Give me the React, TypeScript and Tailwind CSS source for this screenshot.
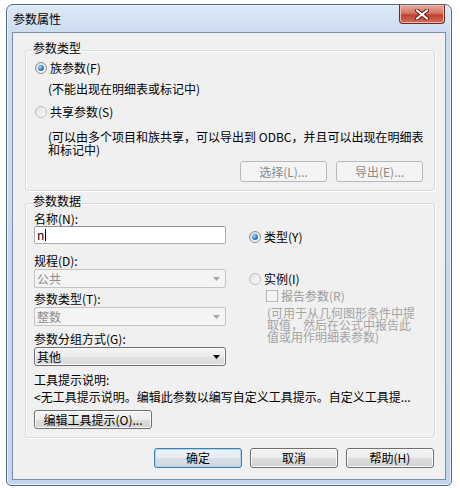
import React from "react";

function Radio({ checked, disabled }: { checked?: boolean; disabled?: boolean }) {
  return (
    <span
      className={
        disabled
          ? "flex h-[12px] w-[12px] shrink-0 items-center justify-center rounded-full border border-[#bcbcbc] bg-[linear-gradient(135deg,#e2e2e2,#fbfbfb)]"
          : "flex h-[12px] w-[12px] shrink-0 items-center justify-center rounded-full border border-[#8a8c8e] bg-[linear-gradient(135deg,#d8d8d8,#ffffff)]"
      }
    >
      {checked && (
        <span className="h-[6px] w-[6px] rounded-full bg-[radial-gradient(circle_at_35%_35%,#a6dcf7,#2a7cbf_55%,#0d4680)]" />
      )}
    </span>
  );
}

function Arrow({ color }: { color: string }) {
  return (
    <svg width="7" height="4" viewBox="0 0 7 4">
      <path d="M0 0 L7 0 L3.5 4 Z" fill={color} />
    </svg>
  );
}

function Button({
  children,
  className,
  disabled,
  focused,
}: {
  children: React.ReactNode;
  className: string;
  disabled?: boolean;
  focused?: boolean;
}) {
  let look =
    "border-[#707070] text-black bg-[linear-gradient(to_bottom,#f4f4f4_0%,#ececec_50%,#dedede_51%,#d2d2d2_100%)] shadow-[inset_0_0_0_1px_#fbfbfb]";
  if (disabled) {
    look = "border-[#b5b9bc] text-[#8a8a8a] bg-[#f4f4f4]";
  }
  if (focused) {
    look =
      "border-[#3c7fb1] text-black bg-[linear-gradient(to_bottom,#eef3f7_0%,#e5ecf1_50%,#d7e0e7_51%,#cdd7df_100%)] shadow-[inset_0_0_0_1px_#a9d6f1]";
  }
  return (
    <div
      className={
        "flex items-center justify-center rounded-[3px] border text-[12px] leading-[14px] whitespace-nowrap " +
        look +
        " " +
        className
      }
    >
      {children}
    </div>
  );
}

export default function App() {
  return (
    <div className="h-[490px] w-[460px] bg-white pl-[6px] pt-[4px] font-['Noto_Sans_CJK_SC',sans-serif] text-[12px] text-black">
      {/* window frame */}
      <div className="h-[482px] w-[446px] rounded-t-[7px] rounded-b-[5px] border border-[#55687e] bg-[linear-gradient(to_bottom,#dde9f6_0px,#cbddf0_28px,#c2d7ee_100%)] shadow-[inset_0_0_0_1px_#e8f0f9]">
        <div className="flex h-[27px] items-start justify-between">
          <div className="pl-[6px] pt-[6px] leading-[16px]">参数属性</div>
          <div className="mr-[6px] flex h-[19px] w-[46px] items-center justify-center rounded-b-[4px] border border-t-0 border-[#6d2a20] bg-[linear-gradient(to_bottom,#e9a99b_0%,#d77666_45%,#c2402c_55%,#d0705d_100%)] shadow-[inset_0_0_0_1px_#efb9ad]">
            <svg width="14" height="11" viewBox="0 0 14 11">
              <path d="M2 1.5 L12 9.5 M12 1.5 L2 9.5" stroke="#5b1c14" strokeWidth="4" strokeLinecap="round" />
              <path d="M2 1.5 L12 9.5 M12 1.5 L2 9.5" stroke="#ffffff" strokeWidth="2.2" strokeLinecap="round" />
            </svg>
          </div>
        </div>

        {/* client area */}
        <div className="ml-[5px] h-[448px] w-[434px] border border-[#7a8ea6] bg-[#f0f0f0] pl-[12px] pr-[10px] pt-[8px]">
          {/* group 1 */}
          <fieldset className="w-[410px] rounded-[3px] border border-[#d3dbe0] p-0 shadow-[inset_1px_1px_0_#ffffff,1px_1px_0_#ffffff]">
            <legend className="ml-[6px] px-[1px] pb-[4px] leading-[14px]">参数类型</legend>
            <div className="px-[9px] pb-[8px]">
              <div className="mt-[1px] flex h-[16px] items-center gap-[3px]">
                <Radio checked />
                <span className="leading-[16px]">族参数(F)</span>
              </div>
              <div className="mt-[5px] pl-[13px] leading-[16px]">(不能出现在明细表或标记中)</div>
              <div className="mt-[7px] flex h-[16px] items-center gap-[3px]">
                <Radio disabled />
                <span className="leading-[16px]">共享参数(S)</span>
              </div>
              <div className="mt-[10px] whitespace-nowrap pl-[13px] leading-[13px]">
                (可以由多个项目和族共享，可以导出到 ODBC，并且可以出现在明细表
                <br />
                和标记中)
              </div>
              <div className="mt-[5px] mr-[2px] flex justify-end gap-[9px]">
                <Button disabled className="h-[21px] w-[87px]">
                  选择(L)...
                </Button>
                <Button disabled className="h-[21px] w-[87px]">
                  导出(E)...
                </Button>
              </div>
            </div>
          </fieldset>

          {/* group 2 */}
          <fieldset className="mt-[3px] w-[410px] rounded-[3px] border border-[#d3dbe0] p-0 shadow-[inset_1px_1px_0_#ffffff,1px_1px_0_#ffffff]">
            <legend className="ml-[6px] px-[1px] pb-[4px] leading-[14px]">参数数据</legend>
            <div className="pl-[8px] pr-[9px] pb-[8px]">
              <div className="flex">
                <div className="w-[192px]">
                  <div className="leading-[14px]">名称(N):</div>
                  <div className="flex h-[18px] items-center rounded-[2px] border border-[#abadb3] border-t-[#8e9196] bg-white pl-[2px]">
                    <span className="leading-[14px]">n</span>
                    <span className="ml-[1px] h-[12px] w-[1px] bg-black" />
                  </div>

                  <div className="mt-[10px] leading-[14px]">规程(D):</div>
                  <div className="mt-[1px] flex h-[19px] items-center justify-between rounded-[2px] border border-[#c4c4c4] bg-[#f4f4f4] pl-[2px] pr-[5px] text-[#8c8c8c]">
                    <span className="leading-[14px]">公共</span>
                    <Arrow color="#a6a6a6" />
                  </div>

                  <div className="mt-[4px] leading-[14px]">参数类型(T):</div>
                  <div className="mt-[1px] flex h-[19px] items-center justify-between rounded-[2px] border border-[#c4c4c4] bg-[#f4f4f4] pl-[2px] pr-[5px] text-[#8c8c8c]">
                    <span className="leading-[14px]">整数</span>
                    <Arrow color="#a6a6a6" />
                  </div>

                  <div className="mt-[6px] leading-[14px]">参数分组方式(G):</div>
                  <div className="mt-[1px] flex h-[19px] items-center justify-between rounded-[3px] border border-[#707070] bg-[linear-gradient(to_bottom,#f4f4f4_0%,#ececec_50%,#e2e2e2_51%,#dadada_100%)] pl-[2px] pr-[5px] shadow-[inset_0_0_0_1px_#fafafa]">
                    <span className="leading-[14px]">其他</span>
                    <Arrow color="#000000" />
                  </div>
                </div>

                <div className="ml-[23px]">
                  <div className="mt-[17px] flex h-[16px] items-center gap-[3px]">
                    <Radio checked />
                    <span className="leading-[16px]">类型(Y)</span>
                  </div>
                  <div className="mt-[26px] flex h-[16px] items-center gap-[3px]">
                    <Radio disabled />
                    <span className="leading-[16px]">实例(I)</span>
                  </div>
                  <div className="mt-[1px] flex h-[16px] items-center gap-[3px] pl-[17px] text-[#9a9a9a]">
                    <span className="h-[12px] w-[12px] border border-[#b8b8b8] bg-[#f4f4f4]" />
                    <span className="leading-[16px]">报告参数(R)</span>
                  </div>
                  <div className="mt-[3px] whitespace-nowrap pl-[18px] leading-[12px] text-[#a3a3a3]">
                    (可用于从几何图形条件中提
                    <br />
                    取值，然后在公式中报告此
                    <br />
                    值或用作明细表参数)
                  </div>
                </div>
              </div>

              <div className="mt-[7px] leading-[14px]">工具提示说明:</div>
              <div className="mt-[3px] whitespace-nowrap leading-[14px]">
                &lt;无工具提示说明。编辑此参数以编写自定义工具提示。自定义工具提...
              </div>
              <Button className="mt-[6px] h-[19px] w-[118px]">编辑工具提示(O)...</Button>
            </div>
          </fieldset>

          {/* dialog buttons */}
          <div className="mt-[10px] mr-[1px] flex justify-end gap-[8px]">
            <Button focused className="h-[20px] w-[88px]">
              确定
            </Button>
            <Button className="h-[20px] w-[88px]">取消</Button>
            <Button className="h-[20px] w-[88px]">帮助(H)</Button>
          </div>
        </div>
      </div>
    </div>
  );
}
